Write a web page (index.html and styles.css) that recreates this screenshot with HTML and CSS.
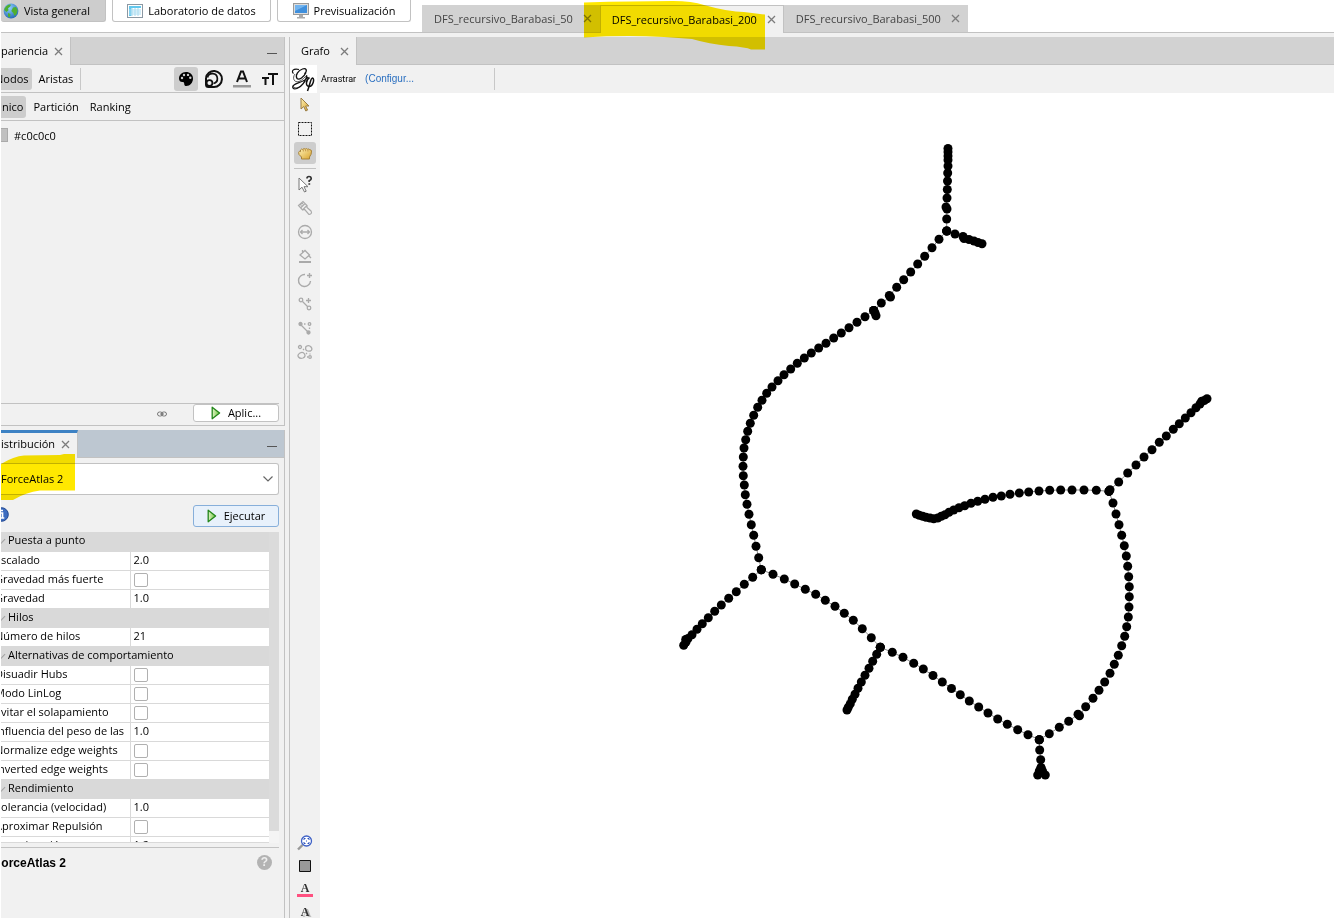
FILE: index.html
```html
<!DOCTYPE html>
<html lang="es">
<head>
<meta charset="utf-8">
<title>Gephi</title>
<link rel="stylesheet" href="styles.css">
</head>
<body>
<svg class="defs" width="0" height="0" aria-hidden="true">
  <defs>
    <radialGradient id="globe" cx=".4" cy=".3" r=".8"><stop offset="0" stop-color="#8fd0ff"/><stop offset="1" stop-color="#1c5fae"/></radialGradient>
    <linearGradient id="play" x2="1"><stop offset="0" stop-color="#e2f5c8"/><stop offset="1" stop-color="#6cc23c"/></linearGradient>
    <linearGradient id="gold" x2="1" y2="1"><stop offset="0" stop-color="#fff3b8"/><stop offset="1" stop-color="#d9a32c"/></linearGradient>
    <symbol id="x" viewBox="0 0 9 9"><path d="M1 1l7 7M8 1L1 8" stroke="#7c7c7c" stroke-width="1.3" fill="none"/></symbol>
    <symbol id="run" viewBox="0 0 10 14"><path d="M1.2 1.2v11.6L8.6 7z" fill="url(#play)" stroke="#23861a" stroke-width="1.3" stroke-linejoin="round"/></symbol>
  </defs>
</svg>
<div class="app">
  <header class="topbar">
    <nav class="modes">
      <button class="mode mode-on"><svg width="16" height="16" viewBox="0 0 16 16"><circle cx="8" cy="8" r="7.4" fill="url(#globe)"/><path d="M3 3.5q3-3 5-1.7l-1 2-2 1.5.5 2L3.5 9 1.2 7q.3-2 1.8-3.500zM10 4.500l3-.5 1.600 3-1 4-2 2-1.300-3-2-2zM5 10l2.500 1-.5 3.500-2-1z" fill="#4faf2e"/></svg><span>Vista general</span></button>
      <button class="mode"><svg width="16" height="16" viewBox="0 0 16 16"><rect x=".5" y="1.500" width="15" height="13" fill="#fff" stroke="#8b98a3"/><path d="M2 3h12v2H2zM2 5h2.500v8H2z" fill="#62c8ee"/><path d="M2 7h12M2 9h12M2 11h12M5 5v8M8 5v8M11 5v8" stroke="#a9dcf1"/></svg><span>Laboratorio de datos</span></button>
      <button class="mode"><svg width="16" height="16" viewBox="0 0 16 16"><rect x=".5" y=".5" width="15" height="11" fill="#ddd" stroke="#999"/><path d="M2 2h12v8H2z" fill="#3f8fdc"/><path d="M2 2h12L2 8z" fill="#72b4ef"/><path d="M6 12h4v2h2v1.500H4V14h2z" fill="#aaa"/></svg><span>Previsualización</span></button>
    </nav>
    <div class="workspaces">
      <div class="ws"><span>DFS_recursivo_Barabasi_50</span><button class="close" aria-label="Cerrar"><svg width="9" height="9"><use href="#x"/></svg></button></div>
      <div class="ws ws-on"><span>DFS_recursivo_Barabasi_200</span><button class="close" aria-label="Cerrar"><svg width="9" height="9"><use href="#x"/></svg></button>
        <svg class="marker marker-ws" viewBox="0 0 182 49" width="182" height="49"><path d="M0 1.500Q50 0 89 0 108 0 120 4 145 11 160 11L181 13.500V48.500H167Q162 46 145 45 125 43 108 38 95 37 80 36 40 34 0 36.500z" fill="#ffe800"/></svg></div>
      <div class="ws"><span>DFS_recursivo_Barabasi_500</span><button class="close" aria-label="Cerrar"><svg width="9" height="9"><use href="#x"/></svg></button></div>
    </div>
  </header>

  <main class="work">
    <aside class="side">
      <section class="panel look">
        <div class="head"><div class="tab"><span class="cut-a">Apariencia</span><button class="close" aria-label="Cerrar"><svg width="9" height="9"><use href="#x"/></svg></button></div><button class="mini" aria-label="Minimizar"></button></div>
        <div class="bar">
          <button class="chip chip-on cut-n">Nodos</button><button class="chip">Aristas</button><i class="vline"></i>
          <div class="kinds">
            <button class="tool tool-on" aria-label="Color"><svg width="16" height="16" viewBox="0 0 16 16"><path d="M8 1C3.700 1 1 4 1 7.500c0 2.400 1.600 3.500 3.200 3.500 1.700 0 2 .6 2 1.700C6.200 14.200 7 15 8.300 15 12 15 15 11.500 15 7.500 15 3.500 12 1 8 1z"/><g fill="#ccc"><circle cx="4" cy="7" r="1.200"/><circle cx="6" cy="4" r="1.200"/><circle cx="10" cy="3.900" r="1.200"/><circle cx="12.300" cy="6.800" r="1.200"/></g></svg></button>
            <button class="tool" aria-label="Tamaño"><svg width="20" height="20" viewBox="0 0 20 20" fill="none" stroke="#111" stroke-width="2"><path d="M2 9A8 8 0 1 1 10 18"/><path d="M3.500 8.500A5 5 0 1 1 9.500 14.500" stroke-width="1.700"/><path d="M2 9v6.500A2.500 2.500 0 0 0 4.500 18H10"/><circle cx="5.500" cy="14" r="2.900" fill="#f1f1f1" stroke-width="1.700"/></svg></button>
            <button class="tool" aria-label="Color de etiqueta"><svg width="18" height="18" viewBox="0 0 18 18"><path d="M4 12L8 1.500h2L14 12M5.800 8.500h6.400" fill="none" stroke="#111" stroke-width="2"/><path d="M0 15h18v2.500H0z" fill="#999"/></svg></button>
            <button class="tool" aria-label="Tamaño de etiqueta"><svg width="16" height="16" viewBox="0 0 16 16" fill="none" stroke="#111" stroke-width="2"><path d="M6 3h10M11 3v11M0 7h7M3.500 7v7"/></svg></button>
          </div>
        </div>
        <div class="bar"><button class="chip chip-on cut-u">Único</button><button class="chip">Partición</button><button class="chip">Ranking</button></div>
        <div class="body"><button class="swatch" aria-label="Elegir color"></button><span>#c0c0c0</span></div>
        <div class="foot"><svg width="10" height="6" viewBox="0 0 10 6" fill="none" stroke="#777"><rect x=".5" y="1" width="5" height="4" rx="2"/><rect x="4.500" y="1" width="5" height="4" rx="2"/><path d="M3 3h4"/></svg><button class="btn btn-apply"><svg width="10" height="14"><use href="#run"/></svg><span>Aplic...</span></button></div>
      </section>

      <section class="panel layout">
        <div class="head head-on"><div class="tab tab-on"><span class="cut-d">Distribución</span><button class="close" aria-label="Cerrar"><svg width="9" height="9"><use href="#x"/></svg></button></div><button class="mini" aria-label="Minimizar"></button></div>
        <div class="pick"><select aria-label="Distribución"><option>ForceAtlas 2</option></select><svg class="chev" width="10" height="6" viewBox="0 0 10 6"><path d="M.5.5L5 5 9.500.5" fill="none" stroke="#666" stroke-width="1.200"/></svg>
          <svg class="marker marker-pick" width="75" height="46" viewBox="0 0 75 46"><path d="M0 10Q13 2 23 1.500L59 1 63 0h11v36.500H39Q25 38 12 46H0z" fill="#ffe800"/></svg></div>
        <div class="go"><svg class="info" width="15" height="15" viewBox="0 0 15 15"><circle cx="7.500" cy="7.500" r="6.800" fill="#3c6cc0" stroke="#1d448f"/><path d="M6 6h2.500v5M5.800 11h4.500M7 3.500h2" stroke="#fff" stroke-width="1.700" fill="none"/></svg><button class="btn btn-run"><svg width="10" height="14"><use href="#run"/></svg><span>Ejecutar</span></button></div>
        <div class="sheet">
          <div class="sheet-clip">
          <table>
            <colgroup><col class="c1"><col></colgroup>
            <tr class="grp"><th colspan="2">Puesta a punto</th></tr>
            <tr><td>Escalado</td><td>2.0</td></tr>
            <tr><td><label for="p1">Gravedad más fuerte</label></td><td><input type="checkbox" id="p1"></td></tr>
            <tr><td>Gravedad</td><td>1.0</td></tr>
            <tr class="grp"><th colspan="2">Hilos</th></tr>
            <tr><td>Número de hilos</td><td>21</td></tr>
            <tr class="grp"><th colspan="2">Alternativas de comportamiento</th></tr>
            <tr><td><label for="p2">Disuadir Hubs</label></td><td><input type="checkbox" id="p2"></td></tr>
            <tr><td><label for="p3">Modo LinLog</label></td><td><input type="checkbox" id="p3"></td></tr>
            <tr><td><label for="p4">Evitar el solapamiento</label></td><td><input type="checkbox" id="p4"></td></tr>
            <tr><td>Influencia del peso de las</td><td>1.0</td></tr>
            <tr><td><label for="p5">Normalize edge weights</label></td><td><input type="checkbox" id="p5"></td></tr>
            <tr><td><label for="p6">Inverted edge weights</label></td><td><input type="checkbox" id="p6"></td></tr>
            <tr class="grp"><th colspan="2">Rendimiento</th></tr>
            <tr><td>Tolerancia (velocidad)</td><td>1.0</td></tr>
            <tr><td><label for="p7">Aproximar Repulsión</label></td><td><input type="checkbox" id="p7"></td></tr>
            <tr><td>Aproximación</td><td>1.2</td></tr>
          </table>
          </div>
          <div class="scroll"><div class="thumb"></div></div>
        </div>
        <div class="desc"><b>ForceAtlas 2</b><button class="help" aria-label="Ayuda">?</button></div>
      </section>
    </aside>

    <section class="graph">
      <div class="head"><div class="tab tab-g"><span>Grafo</span><button class="close" aria-label="Cerrar"><svg width="9" height="9"><use href="#x"/></svg></button></div></div>
      <div class="gbar">
        <svg class="logo" width="27" height="28" viewBox="0 0 27 28" fill="none" stroke="#111"><path d="M14.500 9C18 5 16 3 12.500 4 8 5.500 5 10.500 7 13.500 9 15.500 14 12 16 7.500" stroke-width="1.300"/><path d="M9 4.500C3 3 1 6.500 3.500 8.500M17 10.500C15.500 16 12 21.500 7 23.500 3 25 1.500 22 4 20 7 17.500 15 17 18 12" stroke-width="1.200"/><path d="M5 9C2 13 4 18 9 16.500 12 15.500 15 12 17 10M2.500 21c3 4 9 1 13-5" stroke-width=".7"/><path d="M19.500 12.500C15.500 15 15.500 21.500 19 21.500 23 21.500 25 13.500 22.500 13 20.500 13 20 20 17.500 26" stroke-width="1.500"/></svg>
        <span class="drag">Arrastrar</span><a class="conf" href="#">(Configur...</a><i class="vline"></i>
      </div>
      <div class="stage">
        <div class="tools">
          <button class="tb" aria-label="Seleccionar"><svg width="16" height="16" viewBox="0 0 16 16"><path d="M4 1v11l2.800-2.500 2 4.500 1.800-.9-2-4.100H12z" fill="url(#gold)" stroke="#997d45"/></svg></button>
          <button class="tb" aria-label="Rectángulo"><svg width="16" height="16" viewBox="0 0 16 16"><path d="M1.500 1.500h13v13h-13z" fill="none" stroke="#111" stroke-dasharray="2 1"/></svg></button>
          <button class="tb tb-on" aria-label="Arrastrar"><svg width="16" height="16" viewBox="0 0 16 16"><path d="M4.500 14v-2L2 9.500Q1 7 2.500 6.200l1 .5V5q1-1.600 2.200-.5Q7 2.800 8.200 4.200q1.300-1.300 2.400.1 1.500-1 2.100.5 1.500-.3 1.800 1.200.2 3.500-2 6V14z" fill="url(#gold)" stroke="#a78238"/><path d="M6.300 4.500v2M8.600 4.300v2M10.900 4.500v2" stroke="#c59a4c" fill="none"/></svg></button>
          <i class="hline"></i>
          <button class="tb" aria-label="Información"><svg width="18" height="18" viewBox="0 0 18 18"><path d="M3 3v12l3-2.800L8.500 17l1.700-.8L8 11.700h4z" fill="#fff" stroke="#777"/><path d="M11 3.500Q11 1.500 13 1.500t2.200 1.700-2 2.500V7M12.400 9h1.800" fill="none" stroke="#333" stroke-width="1.700"/></svg></button>
          <button class="tb" aria-label="Pincel"><svg width="16" height="16" viewBox="0 0 16 16" fill="none" stroke="#aaa" stroke-width="1.200"><path d="M1.500 5.500l4.500-4 4 4L5.500 10zM3.500 8L8 3.500M3 4l1.500 1.500M4.500 2.500L6 4M10 5.500V7.500l4 3.500q1.200 2-.5 3t-2.500-.7L7.700 9.500 5.500 10"/></svg></button>
          <button class="tb" aria-label="Tamaño"><svg width="16" height="16" viewBox="0 0 16 16" fill="none" stroke="#aaa" stroke-width="1.300"><circle cx="8" cy="8" r="6.500"/><path d="M3.500 8h9M5.500 6l-2 2 2 2M10.500 6l2 2-2 2"/></svg></button>
          <button class="tb" aria-label="Bote"><svg width="16" height="16" viewBox="0 0 16 16" fill="none" stroke="#aaa" stroke-width="1.300"><path d="M3 7l5-4.500L12.500 7 8 11zM5.500 5V2M12 8l2 2"/><path d="M2 14h12" stroke-width="2"/></svg></button>
          <button class="tb" aria-label="Añadir nodo"><svg width="16" height="16" viewBox="0 0 16 16" fill="none" stroke="#aaa" stroke-width="1.400"><path d="M8 2.500A6 6 0 1 0 13.500 9M12.500 1v5M10 3.500h5"/></svg></button>
          <button class="tb" aria-label="Añadir arista"><svg width="16" height="16" viewBox="0 0 16 16" fill="none" stroke="#aaa" stroke-width="1.300"><circle cx="4" cy="4" r="1.800"/><circle cx="12" cy="12" r="1.800"/><path d="M5.500 5.500l5 5M11.500 2v5M9 4.500h5"/></svg></button>
          <button class="tb" aria-label="Camino"><svg width="16" height="16" viewBox="0 0 16 16" fill="none" stroke="#aaa" stroke-width="1.300"><circle cx="3.500" cy="4" r="1.500" fill="#aaa"/><circle cx="11.500" cy="12.500" r="1.500" fill="#aaa"/><circle cx="12.500" cy="4" r="1.300"/><path d="M7 4h1.500M12.500 7.500V9"/><path d="M4 5l7 7"/></svg></button>
          <button class="tb" aria-label="Calor"><svg width="16" height="16" viewBox="0 0 16 16" fill="none" stroke="#aaa" stroke-width="1.300"><circle cx="3" cy="3" r="1.500"/><path d="M9 2.500q3-2 5 .5t-.5 4Q11 7.500 9.500 6.500T9 2.500zM3 9q3-1.500 4.500 1T6 14q-3 1-4.500-1T3 9z"/><circle cx="13" cy="13" r="1.300"/><path d="M6 5l1 1M9 9l1 1M10 13h1M13 9.500v1"/></svg></button>
          <div class="tools-end">
            <button class="tb" aria-label="Centrar"><svg width="16" height="16" viewBox="0 0 16 16"><path d="M5.500 10L1 14.500" stroke="#999" stroke-width="2.400"/><circle cx="9.500" cy="6" r="5" fill="#fff" stroke="#3f62c6" stroke-width="1.300"/><path d="M7 5V3.500h1.500M10.500 3.500H12V5M12 7v1.500h-1.500M8.500 8.500H7V7M9 6h1" stroke="#2850bd" fill="none"/></svg></button>
            <button class="tb" aria-label="Restaurar colores"><svg width="12" height="12" viewBox="0 0 12 12"><path d="M.5.500h11v11H.5z" fill="#999" stroke="#111"/></svg></button>
            <button class="tb lab" aria-label="Color de etiqueta"><span>A</span></button>
            <button class="tb lab shade" aria-label="Etiquetas"><span>A</span></button>
          </div>
        </div>
        <svg class="canvas" viewBox="320 93 1014 825" preserveAspectRatio="xMinYMin meet">
          <defs><marker id="n" viewBox="-5 -5 10 10" markerWidth="10" markerHeight="10" markerUnits="userSpaceOnUse" overflow="visible"><circle r="4.500"/></marker></defs>
          <g class="edges">
            <polyline points="948,148.500 948,152 948,156 948,160 948,166 947.700,173 947.500,181 947.300,189.500 947,198 946,207 947,209 946.700,219 946.700,231"/>
            <polyline points="946.700,231 955,234 963,236.500 964,238.500 969,239.500 974,241 978,242.500 982,243.700"/>
            <polyline points="946.700,231 939,239.300 932,247.700 924.700,256.300 917.700,264 910.700,272 903.700,279.700 896.700,287.300 889.300,295.500 890.500,297 881.300,303 873.700,310.500"/>
            <polyline points="873.700,310.500 875,313 876,315.700"/>
            <polyline points="873.700,310.500 865,316.700 857,322.300 849,327.700 841.300,333 833.700,338 826,343.300 818.700,348 811.300,353 804.300,358 797.300,363.300 790.700,369 784,374.700 778,380.700 772,387 766.700,393.300 762,400.300 757.700,407.300 753.700,415.300 750.300,423.300 747.700,431.300 745.700,439.700 744,448 743.300,457 743,466.300 743.300,475.700 744.300,485 745.300,494.700 747,504.300 749,514.300 751.300,524.700 753.700,535.300 756,546.300 758.700,557.700 761.300,569.700"/>
            <polyline points="761.300,569.700 752.700,577.300 744.300,584.300 736.300,591.700 728.700,598.300 721.300,605 714.700,611.300 708.300,617.700 702.300,623.700 697,629.300 692,634.700 688,638.500 685.700,639.500 686,642 683.700,645.300"/>
            <polyline points="761.300,569.700 773,574.300 784.300,579 794.700,584 805.300,589.300 815.700,594.300 825.300,600.300 835,606.300 844.300,613.300 853.300,620.300 862.300,628.700 871.300,637.700 880.300,647.300"/>
            <polyline points="880.300,647.300 876.700,654.300 872.700,661.300 869,668.300 865,675.300 861.300,682 858,688.300 855,694.300 852.300,699.300 850.300,703.700 848.300,707.300 847,710"/>
            <polyline points="880.300,647.300 892.300,652.300 903,657.300 913.700,663.300 923.300,669 933,675.500 942.300,682 951.500,688.500 960.300,694.700 969.300,701 978.700,707 988,713 997.700,719 1007.300,724.300 1017.700,729.700 1028,734.700 1039.300,739.700"/>
            <polyline points="1039.300,739.700 1039.700,750 1040.700,759.700 1041,767.700 1039.300,771 1037.700,775"/>
            <polyline points="1041,767.700 1042.500,771 1045.300,775"/>
            <polyline points="1039.300,739.700 1049.300,733.700 1059.300,727.300 1068.700,721.300 1078,714.300 1079.500,715.700 1085.700,706.700 1093,698.300 1099,690.300 1104.700,682 1110,673.300 1114.300,664.300 1118.300,655.300 1121.700,645.700 1124.700,636.300 1126.700,626.700 1128.300,617 1129,607 1129.300,596.700 1129.300,586.700 1128.700,576.700 1127.700,566.300 1126.300,556 1124.300,545.700 1121.700,535.300 1119,524.700 1116,514 1113,503 1109,491.300"/>
            <polyline points="1109,491.300 1110,489.700 1118.700,482 1127.700,473 1136,465 1144,457 1152,449.700 1159.300,442.300 1166.300,436 1173.300,429.300 1179.300,423.700 1185.300,418 1191,412.700 1196,407.700 1200,404 1201.700,401.300 1204.300,400.500 1207,398.700"/>
            <polyline points="1109,491.300 1096.300,490.300 1084,490 1072,490 1060.700,490 1049.700,490.300 1039,491 1028.700,492 1019.300,493 1010,494.300 1001.300,496 993,497.300 985,499.300 977.700,501.300 971,503.300 964.700,505.700 959,507.700 953.700,510 949,512.300 945,514.700 941.300,516.300 937.700,518 933.700,518.700 930,518 926,517.300 922.700,516.300 919.300,515.300 916.300,514"/>
          </g>
        </svg>
      </div>
    </section>
  </main>
</div>
</body>
</html>
```

FILE: styles.css
```css
* { box-sizing: border-box; }
body { margin: 0; background: #fff; color: #000; font: 11px/16px "Open Sans", "Noto Sans", sans-serif; }
button { font: inherit; color: inherit; background: none; border: 0; padding: 0; margin: 0; }
.defs { position: absolute; }
.app { height: 100vh; margin-left: 1px; display: flex; flex-direction: column; overflow: hidden; background: #f1f1f1; }
.mode, .chip, .btn, .ws, .tab { white-space: nowrap; }

.topbar { flex: none; height: 33px; display: flex; gap: 11px; background: #fff; border-bottom: 1px solid #c2c2c2; }
.modes { display: flex; gap: 6px; align-items: flex-start; }
.mode { height: 22px; display: flex; align-items: center; justify-content: center; gap: 5px; width: 159px; border: 1px solid #c2c2c2; border-top: 0; border-radius: 0 0 3px 3px; background: #fff; }
.mode:last-child { width: 134px; }
.mode-on { width: 105px; background: #cdcdcd; border-left: 0; justify-content: flex-start; padding-left: 2px; }
.workspaces { display: flex; align-items: flex-end; }
.ws { height: 27px; padding: 0 8px 0 12px; display: flex; align-items: center; gap: 10px; background: #d2d2d2; color: #444; position: relative; }
.ws-on { height: 28px; margin-bottom: -1px; background: #f1f1f1; color: #000; border: solid #c2c2c2; border-width: 1px 1px 0; padding: 0 7px 0 11px; }
.close { display: flex; }
.marker { position: absolute; mix-blend-mode: multiply; pointer-events: none; z-index: 2; }
.marker-ws { left: -17px; top: -5px; }

.work { flex: 1; min-height: 0; display: flex; gap: 4px; padding-top: 4px; }
.side { flex: none; width: 284px; display: flex; flex-direction: column; gap: 4px; min-height: 0; }
.panel { display: flex; flex-direction: column; border-right: 1px solid #c2c2c2; min-height: 0; overflow: hidden; }
.look { flex: 389 1 0; border-bottom: 1px solid #c2c2c2; }
.layout { flex: 489 1 0; }
.head { flex: none; height: 28px; display: flex; justify-content: space-between; background: #d2d2d2; border-bottom: 1px solid #c2c2c2; }
.head-on { background: #bdc7d1; }
.tab { height: 28px; display: flex; align-items: center; gap: 6px; padding-right: 7px; background: #f1f1f1; border-right: 1px solid #c2c2c2; }
.tab-on { border-top: 3px solid #3d82c4; padding-bottom: 3px; }
.cut-a { margin-left: -7px; }
.cut-d { margin-left: -8px; }
.mini { width: 10px; height: 17px; margin-right: 7px; border-bottom: 1px solid #555; }
.bar { flex: none; height: 28px; padding-top: 1px; display: flex; align-items: center; gap: 3px; border-bottom: 1px solid #c2c2c2; }
.chip { height: 22px; padding: 0 4px; border-radius: 3px; }
.chip-on { background: #cdcdcd; padding: 0 3px; }
.cut-n { margin-left: -9px; }
.cut-u { margin-left: -10px; }
.vline { width: 1px; height: 22px; background: #c8c8c8; }
.kinds { margin-left: auto; margin-right: 2px; display: flex; gap: 4px; }
.tool { width: 24px; height: 24px; display: flex; align-items: center; justify-content: center; border-radius: 3px; }
.tool-on { background: #cdcdcd; }
.body { flex: 1; display: flex; align-items: flex-start; gap: 6px; padding-top: 7px; }
.swatch { width: 7px; height: 14px; background: #c0c0c0; border: 1px solid #aaa; border-left: 0; }
.foot { flex: none; height: 22px; margin-right: 5px; border-top: 1px solid #c2c2c2; display: flex; justify-content: flex-end; align-items: flex-start; gap: 26px; }
.foot > svg { margin-top: 7px; }
.btn { width: 86px; display: flex; align-items: center; justify-content: center; gap: 7px; border: 1px solid #c2c2c2; border-radius: 3px; background: #fff; }
.btn-apply { height: 18px; }
.btn-run { height: 22px; background: #e8f1fb; border-color: #87afda; }

.pick { flex: none; height: 32px; margin: 5px 5px 0 0; display: flex; align-items: center; position: relative; }
.pick select { width: 100%; height: 32px; appearance: none; border: 1px solid #c2c2c2; border-left: 0; border-radius: 0 3px 3px 0; background: #fff; color: #000; font: inherit; padding: 0; }
.chev { position: absolute; right: 6px; }
.marker-pick { left: 0; top: -9px; }
.go { flex: none; margin: 10px 5px 5px 0; display: flex; justify-content: space-between; }
.info { margin: 2px 0 0 -7px; }
.sheet { flex: 1; min-height: 0; margin-right: 5px; display: flex; }
.sheet-clip { flex: 1; overflow: hidden; background: #fff; border-bottom: 1px solid #d9d9d9; }
.sheet table { width: calc(100% + 6px); margin-left: -6px; border-collapse: collapse; table-layout: fixed; }
.c1 { width: 135px; }
.sheet tr { height: 19px; }
.sheet td, .sheet th { height: 19px; padding: 0; font-weight: 400; text-align: left; vertical-align: top; line-height: 16px; border-bottom: 1px solid #d9d9d9; white-space: nowrap; overflow: hidden; }
.sheet td + td { border-left: 1px solid #d9d9d9; padding-left: 3px; }
.sheet th { background: #d9d9d9; }
.sheet th::before { content: ""; display: inline-block; width: 6px; height: 6px; margin: 0 4px 1px 2px; border: solid #a2a2a2; border-width: 0 1px 1px 0; transform: rotate(45deg); }
.sheet input { appearance: none; display: block; width: 14px; height: 14px; margin: 2px 0 0; border: 1px solid #b0b0b0; border-radius: 2px; background: #fff; }
.scroll { width: 10px; background: #f4f4f4; }
.thumb { height: 96%; background: #dbdbdb; }
.desc { flex: none; height: 71px; margin: 4px 5px 0 0; padding: 7px 7px 0 0; border-top: 1px solid #c2c2c2; display: flex; justify-content: space-between; align-items: flex-start; font: 12px/16px "Liberation Sans", Arial, sans-serif; }
.desc b { margin-left: -7px; }
.help { width: 15px; height: 15px; border-radius: 50%; background: #b3b3b3; color: #eee; font-weight: 700; line-height: 15px; }

.graph { flex: 1; min-width: 0; display: flex; flex-direction: column; border-left: 1px solid #c2c2c2; }
.tab-g { padding-left: 11px; gap: 10px; }
.gbar { flex: none; height: 28px; display: flex; align-items: center; }
.logo { background: #fff; margin-right: 4px; }
.drag { font: 9px/16px Roboto, sans-serif; }
.conf { margin-left: 9px; color: #2a6fc0; font: 10px/16px "Liberation Sans", Arial, sans-serif; text-decoration: none; }
.gbar .vline { margin-left: 80px; }
.stage { flex: 1; min-height: 0; display: flex; }
.tools { flex: none; width: 30px; display: flex; flex-direction: column; align-items: center; min-height: 0; }
.tb { flex: none; width: 22px; height: 22px; margin: 1px 0; display: flex; align-items: center; justify-content: center; border-radius: 3px; }
.tb-on { background: #cdcdcd; }
.hline { flex: none; width: 22px; height: 1px; margin: 3px 0; background: #c2c2c2; }
.tools-end { margin-top: auto; margin-bottom: -6px; }
.lab { font: 700 12px/12px "Liberation Serif", serif; color: #333; }
.lab span { width: 16px; border-bottom: 3px solid #ff5080; }
.shade span { border: 0; text-shadow: 2px 1px #bbb; }
.canvas { flex: 1; min-width: 0; width: 100%; height: 100%; background: #fff; }
.edges polyline { fill: none; stroke: #888; stroke-width: 1; marker-start: url(#n); marker-mid: url(#n); marker-end: url(#n); }
```
